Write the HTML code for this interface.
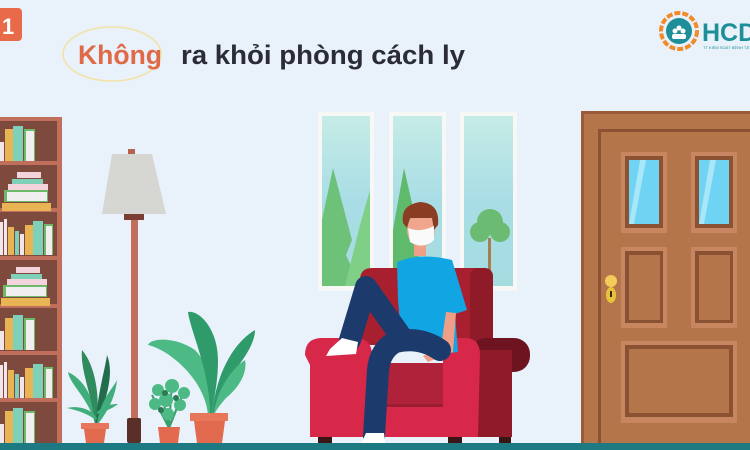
<!DOCTYPE html>
<html><head><meta charset="utf-8"><style>
html,body{margin:0;padding:0;width:750px;height:450px;overflow:hidden;background:#e8f1fb}
svg{display:block}
</style></head><body>
<svg width="750" height="450" viewBox="0 0 750 450" xmlns="http://www.w3.org/2000/svg">
<rect width="750" height="450" fill="#e9f1fa"/>
<rect x="-8" y="8" width="30" height="33" rx="4" fill="#e86a48"/>
<text x="2" y="34" font-family="Liberation Sans,sans-serif" font-weight="bold" font-size="22" fill="#fff">1</text>
<ellipse cx="112" cy="54" rx="49" ry="27" fill="none" stroke="#f1e3a4" stroke-width="1.5"/>
<text x="78" y="64" textLength="84" lengthAdjust="spacingAndGlyphs" font-family="Liberation Sans,sans-serif" font-weight="bold" font-size="27" fill="#e06a48">Không</text>
<text x="181" y="64" textLength="284" lengthAdjust="spacingAndGlyphs" font-family="Liberation Sans,sans-serif" font-weight="bold" font-size="27" fill="#2b2b3a">ra khỏi phòng cách ly</text>
<circle cx="679" cy="31" r="18" fill="none" stroke="#f08a2a" stroke-width="4" stroke-dasharray="6 2"/>
<circle cx="679" cy="31" r="13" fill="#1e8f98"/>
<circle cx="675" cy="31" r="2.5" fill="#fff"/><circle cx="683" cy="31" r="2.5" fill="#fff"/><circle cx="679" cy="28" r="2.5" fill="#fff"/>
<rect x="672" y="34" width="14" height="5" rx="2" fill="#fff"/>
<text x="702" y="41" font-family="Liberation Sans,sans-serif" font-weight="bold" font-size="25" fill="#1e8f98">HCDC</text>
<text x="703" y="49" font-family="Liberation Sans,sans-serif" font-size="4" fill="#1e8f98">TT KIỂM SOÁT BỆNH TẬT TP</text>

<rect x="0" y="117" width="62" height="326" fill="#c06f5d"/>
<rect x="0" y="121" width="57" height="322" fill="#7e4a3e"/>
<g fill="#c06f5d">
<rect x="0" y="161" width="62" height="4"/><rect x="0" y="208" width="62" height="4"/><rect x="0" y="256" width="62" height="4"/>
<rect x="0" y="304" width="62" height="4"/><rect x="0" y="351" width="62" height="4"/><rect x="0" y="398" width="62" height="4"/>
</g>
<g id="up">
<rect x="0" y="142" width="4" height="19" fill="#f3e6ea"/>
<rect x="5" y="129" width="8" height="32" fill="#e9b554"/>
<rect x="13" y="126" width="10" height="35" fill="#7fd0b9"/>
<rect x="24" y="129" width="11" height="32" fill="#6fb96a"/>
<rect x="26" y="131" width="8" height="30" fill="#f1eef0"/>
</g>
<g id="up2" transform="translate(0,94)">
<rect x="0" y="128" width="3" height="33" fill="#f3e6ea"/><rect x="4" y="125" width="3" height="36" fill="#f3e6ea"/>
<rect x="8" y="133" width="6" height="28" fill="#e9b554"/><rect x="15" y="137" width="4" height="24" fill="#7fd0b9"/>
<rect x="20" y="140" width="4" height="21" fill="#f3e6ea"/><rect x="25" y="131" width="8" height="30" fill="#e9b554"/>
<rect x="33" y="127" width="10" height="34" fill="#7fd0b9"/><rect x="44" y="130" width="9" height="31" fill="#6fb96a"/><rect x="46" y="132" width="6" height="29" fill="#f1eef0"/>
</g>
<use href="#up" transform="translate(0,189)"/>
<use href="#up2" transform="translate(0,143)"/>
<use href="#up" transform="translate(0,282)"/>
<g id="st">
<rect x="2" y="203" width="49" height="8" fill="#e9b554"/>
<rect x="4" y="190" width="44" height="12" fill="#6fb96a"/><rect x="7" y="192" width="40" height="9" fill="#f1eef0"/>
<rect x="8" y="184" width="40" height="6" fill="#f4d4dc"/>
<rect x="12" y="179" width="31" height="5" fill="#7fd0b9"/>
<rect x="17" y="172" width="24" height="6" fill="#f4d4dc"/>
</g>
<use href="#st" transform="translate(-1,95)"/>

<rect x="128" y="149" width="7" height="6" fill="#b7624f"/>
<path d="M112 154 L152 154 L166 214 L102 214 Z" fill="#d6d6d3"/>
<rect x="124" y="214" width="20" height="6" fill="#7a3e33"/>
<rect x="131" y="220" width="7" height="200" fill="#c06f5d"/>
<rect x="127" y="418" width="14" height="25" rx="2" fill="#5a2f28"/>

<path d="M95 424 C90 400 70 385 68 372 C85 380 95 400 96 424Z" fill="#3fae7b"/>
<path d="M95 424 C92 395 80 370 82 350 C95 365 100 395 97 424Z" fill="#2f8a5e"/>
<path d="M96 424 C97 395 105 370 107 355 C115 375 105 400 98 424Z" fill="#236d4c"/>
<path d="M97 424 C100 400 112 390 117 380 C115 400 105 415 98 424Z" fill="#3fae7b"/>
<path d="M96 420 C85 412 75 410 67 408 C80 405 92 410 97 418Z" fill="#3fae7b"/>
<path d="M97 412 C105 405 112 404 118 404 C110 410 103 412 97 414Z" fill="#3fae7b"/>
<path d="M82 423 L108 423 L106 429 L104 443 L86 443 L84 429Z" fill="#e26a4e"/>
<rect x="81" y="423" width="28" height="6" fill="#e8765a"/>
<g stroke="#3a9f6c" stroke-width="2" fill="none">
<path d="M169 428 L160 385"/><path d="M169 428 L172 382"/><path d="M169 428 L185 388"/><path d="M169 428 L152 395"/><path d="M169 428 L180 400"/>
</g>
<g fill="#4dba86"><circle cx="158" cy="390" r="6"/><circle cx="172" cy="386" r="7"/><circle cx="184" cy="393" r="6"/><circle cx="155" cy="404" r="6"/><circle cx="180" cy="405" r="6"/><circle cx="166" cy="400" r="7"/><circle cx="168" cy="414" r="6"/></g>
<g fill="#2a7a55"><circle cx="165" cy="393" r="3"/><circle cx="176" cy="398" r="3"/><circle cx="161" cy="410" r="3"/></g>
<path d="M158 427 L180 427 L178 443 L160 443Z" fill="#e26a4e"/>
<path d="M208 415 C205 380 170 350 148 345 C150 338 175 336 195 350 C210 365 212 390 211 415Z" fill="#4dba86"/>
<path d="M210 415 C210 370 190 330 188 312 C200 310 218 330 218 360 C218 385 213 400 212 415Z" fill="#2f9a6a"/>
<path d="M212 415 C215 380 230 345 255 330 C255 345 240 365 228 378 C220 390 216 400 214 415Z" fill="#2f9a6a"/>
<path d="M213 415 C218 390 230 370 245 360 C248 375 236 390 226 398 C220 405 216 410 214 415Z" fill="#4dba86"/>
<path d="M191 414 L227 414 L225 421 L222 443 L197 443 L194 421Z" fill="#e26a4e"/>
<rect x="190" y="413" width="38" height="8" fill="#e8765a"/>

<defs>
<linearGradient id="gl" x1="0" y1="0" x2="0" y2="1"><stop offset="0" stop-color="#c6ece6"/><stop offset="0.5" stop-color="#a9dde6"/><stop offset="1" stop-color="#a4dce0"/></linearGradient>
</defs>
<rect x="318" y="112" width="56" height="179" fill="#f7f8f6"/><rect x="322" y="116" width="48" height="170" fill="url(#gl)"/>
<rect x="389" y="112" width="57" height="179" fill="#f7f8f6"/><rect x="393" y="116" width="49" height="170" fill="url(#gl)"/>
<rect x="460" y="112" width="57" height="179" fill="#f7f8f6"/><rect x="464" y="116" width="49" height="170" fill="url(#gl)"/>
<path d="M322 286 L322 220 L333 168 L352 240 L346 255 L360 286Z" fill="#6ec178"/>
<path d="M345 286 L360 225 L370 190 L370 286Z" fill="#7fcf86"/>
<path d="M393 286 L393 230 L404 168 L418 230 L420 286Z" fill="#5fba6c"/>
<circle cx="490" cy="222" r="13" fill="#6cbb72"/><circle cx="480" cy="232" r="10" fill="#6cbb72"/><circle cx="500" cy="232" r="10" fill="#6cbb72"/>
<rect x="488" y="238" width="3" height="35" fill="#a48050"/>

<path d="M360 280 Q360 268 372 268 L481 268 Q493 268 493 280 L493 345 L360 345Z" fill="#a8202f"/>
<rect x="470" y="268" width="23" height="80" rx="8" fill="#8f1a28"/>
<rect x="470" y="338" width="60" height="34" rx="16" fill="#6e1420"/>
<rect x="470" y="350" width="42" height="87" fill="#8f1a28"/>
<rect x="337" y="363" width="110" height="45" fill="#b0213a"/>
<rect x="337" y="405" width="110" height="32" fill="#d8284a"/>
<rect x="337" y="404" width="110" height="3" fill="#9a1d30"/>
<path d="M305 355 Q305 338 322 338 L355 338 Q372 338 372 355 L372 437 L310 437 L310 365Z" fill="#d8284a"/>
<path d="M443 355 Q443 338 460 338 L465 338 Q480 338 480 355 L478 437 L443 437Z" fill="#d8284a"/>
<g fill="#3a1515"><rect x="318" y="437" width="14" height="6"/><rect x="448" y="437" width="14" height="6"/><rect x="499" y="437" width="12" height="6"/></g>

<!-- man -->
<path d="M397 262 Q420 252 452 260 L467 310 L455 314 L458 352 Q430 356 402 346 L398 300 Z" fill="#11a6e3"/>
<path d="M446 312 L456 313 L453 352 L428 362 L423 356 L441 347Z" fill="#ef9f87"/>
<!-- lower leg -->
<path d="M440 350 Q420 336 395 342 Q380 350 378 370 L374 436" stroke="#1d3a6c" stroke-width="22" fill="none" stroke-linecap="round"/>
<!-- raised leg -->
<path d="M400 335 L366 287 L350 340" stroke="#1d3a6c" stroke-width="22" fill="none" stroke-linejoin="round" stroke-linecap="round"/>
<path d="M342 338 L358 342 L356 354 L326 356 L330 349 Z" fill="#fff"/>
<path d="M366 433 L384 433 L385 443 L360 446 Z" fill="#fff"/>
<rect x="414" y="242" width="12" height="14" fill="#ef9f87"/>
<ellipse cx="421" cy="230" rx="14" ry="17" fill="#f0a68c"/>
<path d="M403 223 Q400 205 420 202 Q440 203 438 225 L434 230 L432 218 L410 218 L407 228Z" fill="#8a3d22"/>
<path d="M408 228 Q420 233 434 226 L434 240 Q424 250 410 242 Z" fill="#fafafa"/>

<rect x="581" y="111" width="169" height="332" fill="#9a5c38"/>
<rect x="584" y="114" width="166" height="329" fill="#b5754b"/>
<rect x="598" y="129" width="152" height="314" fill="#8a5232"/>
<rect x="601" y="132" width="149" height="311" fill="#b5754b"/>
<rect x="621" y="152" width="46" height="81" fill="#c88660"/><rect x="625" y="156" width="38" height="72" fill="#8a5232"/><rect x="629" y="160" width="30" height="64" fill="#6fd3f4"/>
<rect x="691" y="152" width="46" height="81" fill="#c88660"/><rect x="695" y="156" width="38" height="72" fill="#8a5232"/><rect x="699" y="160" width="30" height="64" fill="#6fd3f4"/>
<path d="M640 160 L646 160 L634 224 L629 224Z" fill="#a8e6f8"/><path d="M710 160 L716 160 L704 224 L699 224Z" fill="#a8e6f8"/>
<rect x="621" y="247" width="46" height="81" fill="#c88660"/><rect x="625" y="251" width="38" height="72" fill="#8a5232"/><rect x="629" y="255" width="31" height="65" fill="#b5754b"/>
<rect x="691" y="247" width="46" height="81" fill="#c88660"/><rect x="695" y="251" width="38" height="72" fill="#8a5232"/><rect x="699" y="255" width="31" height="65" fill="#b5754b"/>
<rect x="621" y="341" width="116" height="82" fill="#c88660"/><rect x="625" y="345" width="108" height="72" fill="#8a5232"/><rect x="629" y="349" width="100" height="64" fill="#b5754b"/>
<ellipse cx="611" cy="295" rx="5" ry="8" fill="#e9c23c"/>
<circle cx="611" cy="281" r="6" fill="#f3cb5a"/>
<rect x="610" y="291" width="2" height="6" fill="#3a2a10"/>
<rect x="0" y="443" width="750" height="7" fill="#1d7a82"/>
</svg>
</body></html>
